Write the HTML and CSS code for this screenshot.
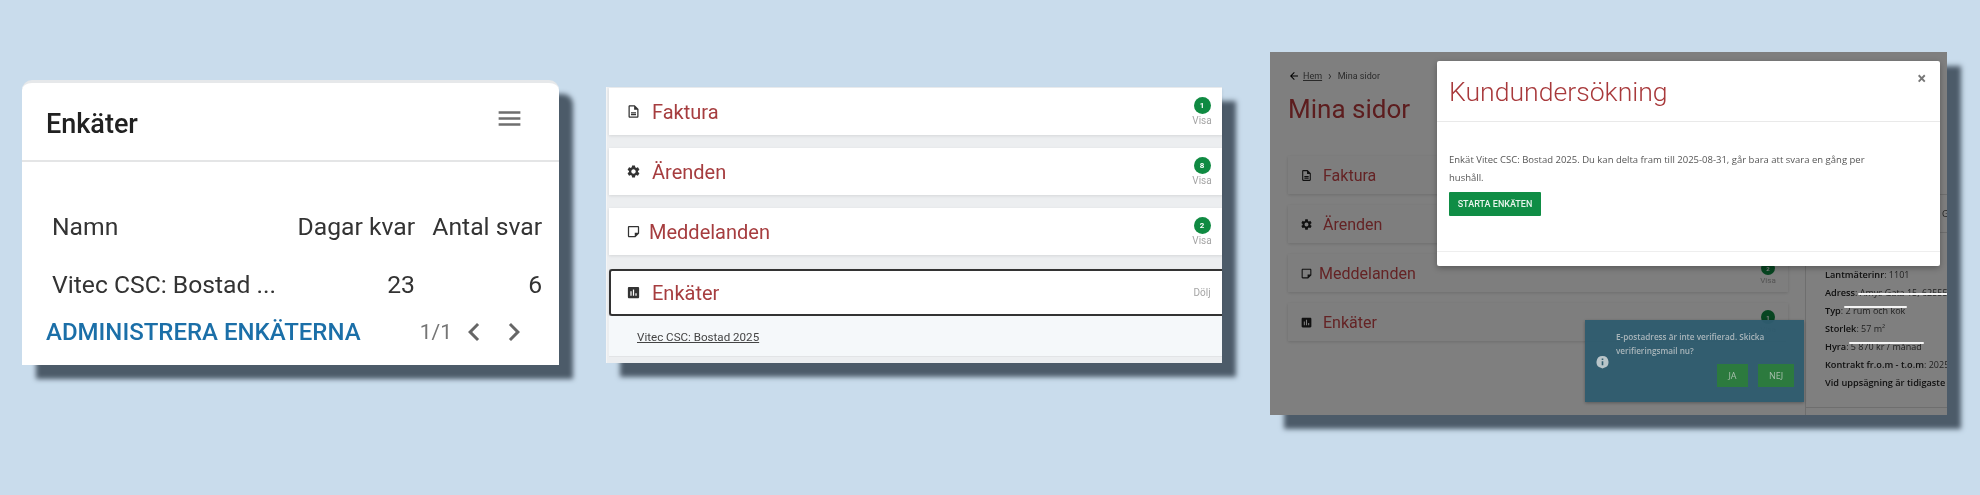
FILE: index.html
```html
<!DOCTYPE html>
<html lang="en">
  <head>
    <meta charset="UTF-8" />
    <title>Enkäter</title>
    <link rel="stylesheet" href="styles.css">
  </head>
  <body>
    <svg class="defs" width="0" height="0">
      <symbol id="i-doc" viewBox="0 0 24 24"><path d="M14 2H6c-1.1 0-2 .9-2 2v16c0 1.1.89 2 1.99 2H18c1.1 0 2-.9 2-2V8l-6-6zM6 20V4h7v5h5v11H6zm2-7h8v2H8zm0 3h8v2H8z"/></symbol>
      <symbol id="i-gear" viewBox="0 0 24 24"><path d="M19.14 12.94c.04-.3.06-.61.06-.94 0-.32-.02-.64-.07-.94l2.03-1.58c.18-.14.23-.41.12-.61l-1.92-3.32c-.12-.22-.37-.29-.59-.22l-2.39.96c-.5-.38-1.03-.7-1.62-.94l-.36-2.54c-.04-.24-.24-.41-.48-.41h-3.84c-.24 0-.43.17-.47.41l-.36 2.54c-.59.24-1.13.57-1.62.94l-2.39-.96c-.22-.08-.47 0-.59.22L2.74 8.87c-.12.21-.08.47.12.61l2.03 1.58c-.05.3-.09.63-.09.94s.02.64.07.94l-2.03 1.58c-.18.14-.23.41-.12.61l1.92 3.32c.12.22.37.29.59.22l2.39-.96c.5.38 1.03.7 1.62.94l.36 2.54c.05.24.24.41.48.41h3.84c.24 0 .44-.17.47-.41l.36-2.54c.59-.24 1.13-.56 1.62-.94l2.39.96c.22.08.47 0 .59-.22l1.92-3.32c.12-.22.07-.47-.12-.61l-2.01-1.58zM12 15.6c-1.98 0-3.6-1.62-3.6-3.6s1.62-3.6 3.6-3.6 3.6 1.62 3.6 3.6-1.62 3.6-3.6 3.6z"/></symbol>
      <symbol id="i-note" viewBox="0 0 24 24"><path d="M19 5v9h-5v5H5V5h14m0-2H5c-1.1 0-2 .9-2 2v14c0 1.1.9 2 2 2h10l6-6V5c0-1.1-.9-2-2-2z"/></symbol>
      <symbol id="i-poll" viewBox="0 0 24 24"><path d="M19 3H5c-1.1 0-2 .9-2 2v14c0 1.1.9 2 2 2h14c1.1 0 2-.9 2-2V5c0-1.1-.9-2-2-2zM9 17H7v-7h2v7zm4 0h-2V7h2v10zm4 0h-2v-4h2v4z"/></symbol>
    </svg>

    <section class="survey-card">
      <header class="survey-head">
        <h2>Enkäter</h2>
        <svg class="menu-icon" viewBox="0 0 24 24"><path d="M3 18h18v-2H3v2zm0-5h18v-2H3v2zm0-7v2h18V6H3z"/></svg>
      </header>
      <div class="survey-table">
        <div class="survey-row">
          <span class="col-name">Namn</span>
          <span class="col-days">Dagar kvar</span>
          <span class="col-count">Antal svar</span>
        </div>
        <div class="survey-row">
          <span class="col-name">Vitec CSC: Bostad ...</span>
          <span class="col-days">23</span>
          <span class="col-count">6</span>
        </div>
      </div>
      <footer class="survey-foot">
        <a class="admin-link">ADMINISTRERA ENKÄTERNA</a>
        <span class="pager">1/1</span>
        <svg class="chevron" viewBox="0 0 24 24"><path d="M15.4 7.4 14 6l-6 6 6 6 1.4-1.4L10.8 12z"/></svg>
        <svg class="chevron" viewBox="0 0 24 24"><path d="M10 6 8.6 7.4 13.2 12l-4.6 4.6L10 18l6-6z"/></svg>
      </footer>
    </section>

    <section class="list-card">
      <div class="list-row">
        <svg class="row-icon"><use href="#i-doc"/></svg>
        <span class="row-title">Faktura</span>
        <span class="row-side"><b class="badge">1</b>Visa</span>
      </div>
      <div class="list-row">
        <svg class="row-icon"><use href="#i-gear"/></svg>
        <span class="row-title">Ärenden</span>
        <span class="row-side"><b class="badge">8</b>Visa</span>
      </div>
      <div class="list-row">
        <svg class="row-icon"><use href="#i-note"/></svg>
        <span class="row-title tight">Meddelanden</span>
        <span class="row-side"><b class="badge">2</b>Visa</span>
      </div>
      <div class="list-row open">
        <svg class="row-icon"><use href="#i-poll"/></svg>
        <span class="row-title">Enkäter</span>
        <span class="row-side">Dölj</span>
      </div>
      <div class="list-detail"><a>Vitec CSC: Bostad 2025</a></div>
    </section>

    <section class="page-shot">
      <div class="page-main">
        <div class="crumbs">
          <svg class="crumb-arrow" viewBox="0 0 24 24"><path d="M20 11H7.8l5.6-5.6L12 4l-8 8 8 8 1.4-1.4L7.8 13H20z"/></svg>
          <a>Hem</a><span class="crumb-sep">›</span><span>Mina sidor</span>
        </div>
        <h1>Mina sidor</h1>
        <div class="page-row">
          <svg class="page-icon"><use href="#i-doc"/></svg><span class="page-title">Faktura</span>
        </div>
        <div class="page-row">
          <svg class="page-icon"><use href="#i-gear"/></svg><span class="page-title">Ärenden</span>
          <span class="row-side small"><b class="badge">8</b>Visa</span>
        </div>
        <div class="page-row">
          <svg class="page-icon"><use href="#i-note"/></svg><span class="page-title tight">Meddelanden</span>
          <span class="row-side small"><b class="badge">2</b>Visa</span>
        </div>
        <div class="page-row">
          <svg class="page-icon"><use href="#i-poll"/></svg><span class="page-title">Enkäter</span>
          <span class="row-side small"><b class="badge">1</b>Visa</span>
        </div>
      </div>
      <aside class="page-side">
        <div class="side-top"></div>
        <div class="side-mid">Ga</div>
        <ul class="facts">
          <li><b>Lantmäterinr</b>: 1101</li>
          <li><b>Adress</b>: <span class="scribbled">Amys Gata 15, 62555</span> Kr</li>
          <li><b>Typ</b>: <span class="scribbled up">2 rum och kök</span></li>
          <li><b>Storlek</b>: 57 m²</li>
          <li><b>Hyra</b>: <span class="scribbled up">5 870 kr / månad</span></li>
          <li><b>Kontrakt fr.o.m - t.o.m</b>: 2025-01</li>
          <li><b>Vid uppsägning är tidigaste ut</b></li>
        </ul>
      </aside>

      <div class="backdrop"></div>

      <div class="toast">
        <svg class="toast-icon" viewBox="0 0 24 24"><path d="M12 1a11 11 0 0 0-3 21.600L12 24l3-1.400A11 11 0 0 0 12 1zm1.500 17h-3v-7.500h3zm0-9.500h-3V5.500h3z"/></svg>
        <div class="toast-body">
          <p>E-postadress är inte verifierad. Skicka verifieringsmail nu?</p>
          <div class="toast-actions"><button class="yes-btn">JA</button><button class="no-btn">NEJ</button></div>
        </div>
      </div>

      <div class="modal">
        <header class="modal-head">
          <h3>Kundundersökning</h3>
          <span class="modal-close">×</span>
        </header>
        <div class="modal-body">
          <p>Enkät Vitec CSC: Bostad 2025. Du kan delta fram till 2025-08-31, går bara att svara en gång per hushåll.</p>
          <button class="start-btn">STARTA ENKÄTEN</button>
        </div>
        <div class="modal-foot"></div>
      </div>
    </section>
  </body>
</html>
```

FILE: styles.css
```css
* {
  margin: 0;
  padding: 0;
  box-sizing: border-box;
}

body {
  width: 1980px;
  height: 495px;
  overflow: hidden;
  display: flex;
  align-items: flex-start;
  background-color: #c9dcec;
  font-family: Roboto, sans-serif;
}

.defs {
  position: absolute;
}

section {
  filter: blur(0.4px);
}

/* first card */

.survey-card {
  width: 537px;
  height: 285px;
  margin: 80px 0 0 22px;
  background-color: #fff;
  border-top: 3px solid #e6e8ea;
  border-radius: 10px 10px 0 0;
  box-shadow: 14px 14px 5px #4c5b69;
}

.survey-head {
  height: 79px;
  padding: 0 24px;
  display: flex;
  align-items: center;
  justify-content: space-between;
  border-bottom: 2px solid #e4e5e6;
}

.survey-head h2 {
  margin-top: 5px;
  font-size: 27px;
  font-weight: 500;
  color: #212121;
}

.menu-icon {
  width: 29px;
  height: 29px;
  margin: -6px 11px 0 0;
  fill: #6f6f6f;
}

.survey-table {
  padding: 35px 17px 0 30px;
}

.survey-row {
  height: 58px;
  display: flex;
  align-items: center;
  font-size: 24.7px;
  color: #333;
}

.col-name {
  flex: 1;
}

.col-days {
  width: 130px;
  text-align: right;
}

.col-count {
  width: 127px;
  text-align: right;
}

.survey-foot {
  margin-top: 1px;
  padding: 0 27px 0 24px;
  display: flex;
  align-items: center;
  font-size: 24px;
}

.admin-link {
  color: #1b6fa8;
  font-weight: 500;
  flex: 1;
}

.pager {
  color: #757575;
  font-size: 21px;
}

.chevron {
  width: 36px;
  height: 36px;
  margin-left: 4px;
  fill: #666;
}

/* second card */

.list-card {
  width: 616px;
  height: 276px;
  margin: 87px 0 0 47px;
  padding: 1px 0 6px 2px;
  display: flex;
  flex-direction: column;
  background-color: #eceef0;
  border-left: 1px solid #f4f5f6;
  box-shadow: 14px 14px 5px #4c5b69;
}

.list-row {
  height: 47px;
  margin-bottom: 13px;
  padding-left: 17px;
  display: flex;
  align-items: center;
  background-color: #fff;
  box-shadow: 0 1px 3px rgba(0, 0, 0, 0.1);
}

.list-row:nth-child(3) {
  margin-bottom: 14px;
}

.list-row.open {
  margin-bottom: 0;
  border: 2px solid #333;
  border-right: none;
  border-radius: 3px 0 0 3px;
  padding-left: 15px;
}

.row-icon {
  width: 15px;
  height: 15px;
  fill: #333;
  flex-shrink: 0;
}

.row-title {
  margin-left: 11px;
  font-size: 20px;
  color: #a63d3f;
}

.row-title.tight {
  margin-left: 8px;
}

.row-side {
  margin-left: auto;
  width: 28px;
  margin-right: 6px;
  display: flex;
  flex-direction: column;
  align-items: center;
  font-size: 10px;
  color: #a5a5a5;
}

.badge {
  width: 17px;
  height: 17px;
  margin-bottom: 1px;
  display: flex;
  align-items: center;
  justify-content: center;
  border-radius: 50%;
  background-color: #0f8a42;
  color: #fff;
  font-size: 8px;
}

.list-detail {
  flex: 1;
  padding: 14px 0 0 28px;
  background-color: #f5f8fa;
  border-bottom: 1px solid #e2e4e6;
  font-size: 11.6px;
  color: #444;
}

.list-detail a {
  text-decoration: underline;
}

/* third card: page behind a modal */

.page-shot {
  position: relative;
  width: 677px;
  height: 363px;
  margin: 52px 0 0 48px;
  padding: 0 0 0 18px;
  display: flex;
  overflow: hidden;
  background-color: #fff;
  box-shadow: 14px 14px 5px #4c5b69;
}

.page-main {
  width: 500px;
  flex-shrink: 0;
}

.crumbs {
  height: 20px;
  margin-top: 14px;
  display: flex;
  align-items: center;
  font-size: 9px;
  color: #555;
}

.crumb-arrow {
  width: 12px;
  height: 12px;
  margin-right: 3px;
}

.crumbs a {
  text-decoration: underline;
}

.crumb-sep {
  margin: 0 6px;
  font-size: 12px;
}

.page-main h1 {
  margin: 7px 0 30px;
  font-size: 26px;
  font-weight: 400;
  line-height: 33px;
  color: #b93a3d;
}

.page-row {
  height: 38px;
  margin-bottom: 11px;
  padding: 0 6px 0 12px;
  display: flex;
  align-items: center;
  background-color: #fdfdfd;
  box-shadow: 0 1px 3px rgba(0, 0, 0, 0.15);
}

.page-icon {
  width: 13px;
  height: 13px;
  fill: #222;
  flex-shrink: 0;
}

.page-title {
  margin-left: 10px;
  font-size: 16px;
  color: #c8474a;
}

.page-title.tight {
  margin-left: 6px;
}

.row-side.small {
  font-size: 8px;
  margin-right: 0;
}

.row-side.small .badge {
  width: 14px;
  height: 14px;
  font-size: 6px;
}

.page-side {
  flex: 1;
  margin-left: 17px;
  margin-top: 104px;
  min-width: 0;
  white-space: nowrap;
  overflow: hidden;
  border-left: 1px solid #ddd;
  font-family: "Open Sans", sans-serif;
  font-size: 9px;
  color: #444;
}

.side-top {
  height: 39px;
  border-bottom: 1px solid #ddd;
}

.side-mid {
  height: 38px;
  padding: 12px 0 0 136px;
  border-bottom: 1px solid #ddd;
}

.facts {
  list-style: none;
  padding: 33px 0 15px 19px;
  border-bottom: 1px solid #ddd;
}

.facts li {
  height: 18px;
  line-height: 18px;
}

.facts b {
  font-size: 9.2px;
  font-weight: 600;
  color: #222;
}

.scribbled {
  position: relative;
}

/* white pen strokes stay bright on top of the backdrop */
.scribbled::after {
  content: "";
  position: absolute;
  left: -2px;
  right: -2px;
  top: 7px;
  height: 2px;
  border-radius: 2px;
  background-color: #f4f4f4;
  z-index: 2;
}

.scribbled.up::after {
  top: 2px;
}

.backdrop {
  position: absolute;
  inset: 0;
  background-color: rgba(0, 0, 0, 0.5);
}

.toast {
  position: absolute;
  left: 315px;
  top: 268px;
  width: 219px;
  height: 82px;
  padding: 10px 10px 0 11px;
  display: flex;
  gap: 7px;
  background-color: rgba(47, 92, 110, 0.96);
  box-shadow: 0 1px 3px rgba(0, 0, 0, 0.3);
  color: #aab6bb;
  font-family: "Open Sans", sans-serif;
  font-size: 8.200px;
  font-weight: 600;
  line-height: 13.500px;
  z-index: 3;
}

.toast-icon {
  width: 13px;
  height: 14px;
  margin-top: 25px;
  flex-shrink: 0;
  fill: #b9c5c9;
}

.toast-body {
  flex: 1;
}

.toast-actions {
  margin-top: 7px;
  display: flex;
  justify-content: flex-end;
  gap: 10px;
}

.toast-actions button {
  height: 23px;
  border: none;
  background-color: #2c7a3e;
  color: #a9bfad;
  font-family: inherit;
  font-size: 9px;
}

.yes-btn {
  width: 31px;
}

.no-btn {
  width: 36px;
}

.modal {
  position: absolute;
  left: 167px;
  top: 9px;
  width: 503px;
  height: 205px;
  display: flex;
  flex-direction: column;
  background-color: #fff;
  border-radius: 2px;
  box-shadow: 0 2px 6px rgba(0, 0, 0, 0.3);
  z-index: 4;
}

.modal-head {
  height: 61px;
  padding: 0 12px;
  display: flex;
  align-items: center;
  justify-content: space-between;
  border-bottom: 1px solid #e9e9e9;
}

.modal-head h3 {
  font-size: 26.6px;
  font-weight: 300;
  color: #a8393b;
}

.modal-close {
  margin: -26px 2px 0 0;
  font-size: 16px;
  font-weight: 700;
  color: #777;
}

.modal-body {
  flex: 1;
  padding: 29px 60px 0 12px;
  font-family: "Open Sans", sans-serif;
  font-size: 9.500px;
  line-height: 18px;
  color: #555;
}

.start-btn {
  margin-top: 5px;
  width: 92px;
  height: 24px;
  border: none;
  border-radius: 1px;
  background-color: #0f8d45;
  color: #e8f4ec;
  font-family: Roboto, sans-serif;
  font-size: 9px;
  font-weight: 500;
}

.modal-foot {
  height: 15px;
  border-top: 1px solid #eee;
}
```
